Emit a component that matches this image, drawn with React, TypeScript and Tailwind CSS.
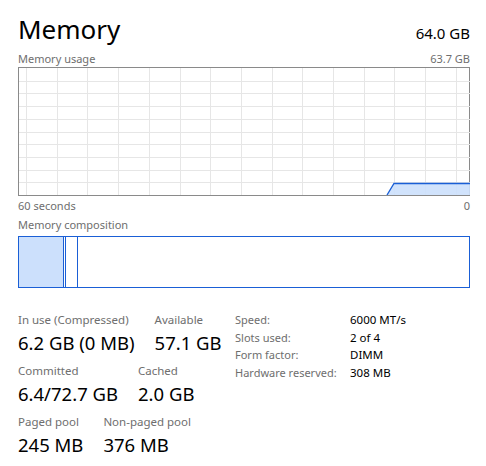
const font = { fontFamily: '"Noto Sans", "Open Sans", sans-serif' }

const vLines = Array.from({ length: 15 }, (_, i) => 7 + i * 30.7)
const hLines = Array.from({ length: 9 }, (_, i) => 12.7 * (i + 1))

function UsageChart() {
  return (
    <div className="h-[129px] border border-[#8a8a8a] bg-white">
      <svg width="451" height="127" className="block">
        {vLines.map((x) => (
          <line key={x} x1={Math.round(x) + 0.5} y1="0" x2={Math.round(x) + 0.5} y2="127" stroke="#e6e6e6" />
        ))}
        {hLines.map((y) => (
          <line key={y} x1="0" y1={Math.round(y) + 0.5} x2="451" y2={Math.round(y) + 0.5} stroke="#e6e6e6" />
        ))}
        <path d="M368 127 L375 115.5 L451 115.5 L451 127 Z" fill="#cce0fc" fillOpacity="0.9" />
        <path d="M368 127 L375 115.5 L451 115.5" fill="none" stroke="#1a5fd6" strokeWidth="1.3" />
      </svg>
    </div>
  )
}

function Stat({ label, value }: { label: string; value: string }) {
  return (
    <div className="flex flex-col">
      <span className="text-[11.5px] leading-[18px] text-[#6e6e6e]">{label}</span>
      <span className="text-[18.5px] leading-[28px] text-black">{value}</span>
    </div>
  )
}

const details = [
  ['Speed:', '6000 MT/s'],
  ['Slots used:', '2 of 4'],
  ['Form factor:', 'DIMM'],
  ['Hardware reserved:', '308 MB'],
]

export default function App() {
  return (
    <div className="h-[466px] w-[486px] bg-white pl-[18px] pr-[16px]" style={font}>
      <div className="flex items-baseline justify-between pt-[11px]">
        <span className="text-[26px] leading-[36px] text-black">Memory</span>
        <span className="text-[15px] text-black">64.0 GB</span>
      </div>
      <div className="mt-[4px] flex justify-between text-[11px] leading-[16px] text-[#6e6e6e]">
        <span>Memory usage</span>
        <span>63.7 GB</span>
      </div>
      <UsageChart />
      <div className="mt-[2px] flex justify-between text-[11px] leading-[16px] text-[#6e6e6e]">
        <span>60 seconds</span>
        <span>0</span>
      </div>
      <div className="mt-[3px] text-[11px] leading-[16px] text-[#6e6e6e]">Memory composition</div>
      <div className="mt-[3px] flex h-[52px] border border-[#1a5fd6]">
        <div className="w-[45px] border-r border-[#1a5fd6] bg-[#cce0fc]" />
        <div className="w-[2px] border-r border-[#1a5fd6]" />
        <div className="w-[12px] border-r border-[#1a5fd6]" />
        <div className="flex-1" />
      </div>
      <div className="mt-[23px] flex items-start">
        <div className="flex w-[217px] flex-col gap-[5px]">
          <div className="flex gap-[20px]">
            <Stat label="In use (Compressed)" value="6.2 GB (0 MB)" />
            <Stat label="Available" value="57.1 GB" />
          </div>
          <div className="flex gap-[20px]">
            <Stat label="Committed" value="6.4/72.7 GB" />
            <Stat label="Cached" value="2.0 GB" />
          </div>
          <div className="flex gap-[20px]">
            <Stat label="Paged pool" value="245 MB" />
            <Stat label="Non-paged pool" value="376 MB" />
          </div>
        </div>
        <div className="grid grid-cols-[115px_auto] leading-[17.5px]">
          {details.map(([k, v]) => (
            <div key={k} className="contents">
              <span className="text-[11px] text-[#6e6e6e]">{k}</span>
              <span className="text-[11.5px] text-black">{v}</span>
            </div>
          ))}
        </div>
      </div>
    </div>
  )
}
